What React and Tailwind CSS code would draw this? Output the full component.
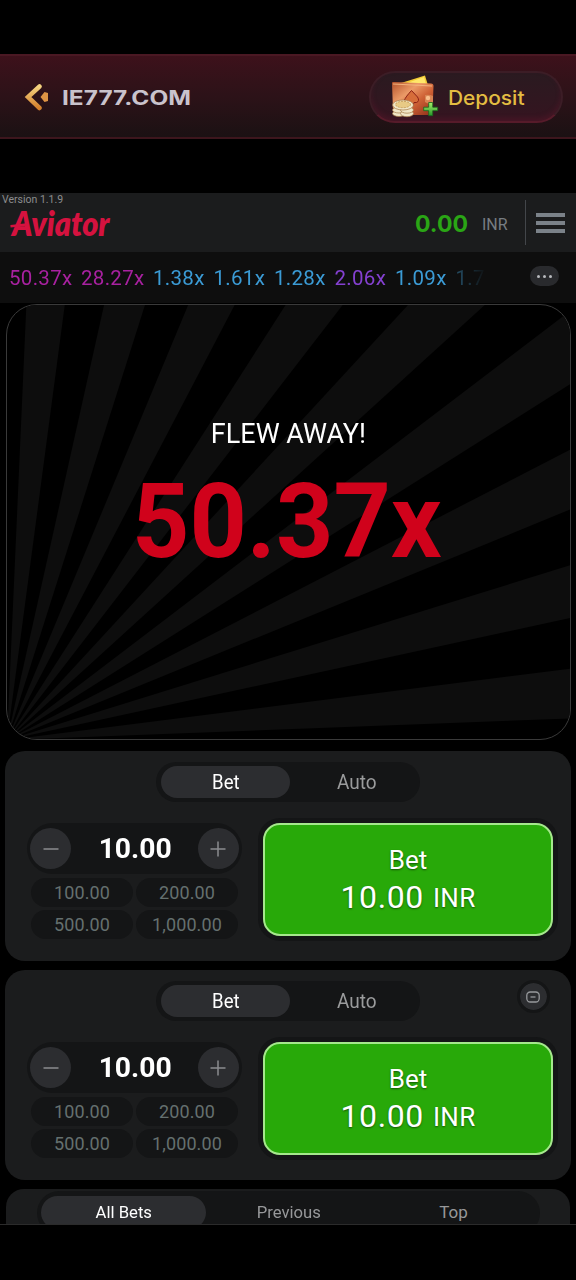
import React from "react";

const rounds = [
  { value: "50.37x", color: "text-[#a821a0]", width: "w-[72px]" },
  { value: "28.27x", color: "text-[#a821a0]", width: "w-[72px]" },
  { value: "1.38x", color: "text-[#3b9bd5]", width: "w-[60.5px]" },
  { value: "1.61x", color: "text-[#3b9bd5]", width: "w-[60.5px]" },
  { value: "1.28x", color: "text-[#3b9bd5]", width: "w-[60.5px]" },
  { value: "2.06x", color: "text-[#8440d0]", width: "w-[60.5px]" },
  { value: "1.09x", color: "text-[#3b9bd5]", width: "w-[60.5px]" },
  { value: "1.7", color: "text-[#2b5f7d]", width: "w-[40px]" },
];

function Wallet() {
  return (
    <svg width="50" height="44" viewBox="0 0 50 44" className="shrink-0">
      <defs>
        <linearGradient id="leather" x1="0" y1="0" x2="1" y2="1">
          <stop offset="0" stopColor="#b4512a" />
          <stop offset="0.35" stopColor="#eb9a67" />
          <stop offset="0.6" stopColor="#cf6236" />
          <stop offset="1" stopColor="#8d2c18" />
        </linearGradient>
        <linearGradient id="plus" x1="0" y1="0" x2="0" y2="1">
          <stop offset="0" stopColor="#a4f06a" />
          <stop offset="1" stopColor="#259529" />
        </linearGradient>
      </defs>
      <path d="M12 8 36 0.500 39.500 12 20 15Z" fill="#f3cd35" />
      <path d="M18 8 35 2 37.500 11Z" fill="#ffe76a" />
      <path d="M3 8Q3 6.500 5 7L42 8.500Q44.500 8.500 44.500 11L43.500 37Q43.500 40 41 40H8Q4 40 4 36Z" fill="url(#leather)" />
      <path d="M4 9 43 11" stroke="#f2b27d" strokeWidth="1.200" fill="none" />
      <path d="M22.500 15.500 28.500 22Q31 26 27.500 27.500L25 27.500 24 31 22 27.500Q16 29 15.500 25Q16.500 22 22.500 15.500Z" fill="#d66d3a" stroke="#8b2116" strokeWidth="1" />
      <path d="M36 20Q40 19 44 21V28Q40 30 36 27Z" fill="#d78352" />
      <circle cx="39" cy="23" r="2.200" fill="#f8bd8b" />
      <g fill="#f1e6c6" stroke="#a37a48" strokeWidth="0.700">
        <ellipse cx="10" cy="38.500" rx="6.500" ry="3" />
        <ellipse cx="10" cy="35" rx="6.500" ry="3" />
        <ellipse cx="18" cy="38.500" rx="6.500" ry="3.200" />
        <ellipse cx="18" cy="35" rx="6.500" ry="3.200" />
        <ellipse cx="14" cy="30" rx="10.500" ry="5" />
      </g>
      <ellipse cx="14" cy="29.500" rx="7.500" ry="3.200" fill="#e8ca85" stroke="#b98c46" strokeWidth="0.700" strokeDasharray="2 1" />
      <path d="M39.700 27.500H43.700V32.200H48.700V35.700H43.700V40.700H39.700V35.700H34.700V32.200H39.700Z" fill="url(#plus)" stroke="#17631d" strokeWidth="0.800" />
    </svg>
  );
}

function TopBar() {
  return (
    <header className="mt-[54px] flex h-[85px] shrink-0 items-center justify-between border-t-2 border-b-2 border-t-[#4a1823] border-b-[#3d161d] bg-linear-to-b from-[#3d111b] via-[#2c1218] to-[#1b1113] pr-[13px] pl-[24px]">
      <div className="flex items-center gap-[13px]">
        <svg width="26" height="28" viewBox="0 0 26 28">
          <defs>
            <linearGradient id="gold" x1="0" y1="0" x2="0" y2="1">
              <stop offset="0" stopColor="#f4d37f" />
              <stop offset="1" stopColor="#d4802c" />
            </linearGradient>
          </defs>
          <path d="M15.500 3.500 4 14 15.500 25" fill="none" stroke="url(#gold)" strokeWidth="4.500" strokeLinecap="round" />
          <path d="M20.500 9 24 10V18L20.500 19 16.500 14Z" fill="#df9545" />
        </svg>
        <svg width="130" height="24" viewBox="0 0 130 24" className="-ml-[1px] overflow-visible">
          <text x="0" y="19.500" textLength="129" lengthAdjust="spacingAndGlyphs" fill="#c9c3cc" className="font-['Inter',sans-serif] text-[19.500px] font-bold">IE777.COM</text>
        </svg>
      </div>
      <button className="mt-[1px] flex h-[52px] w-[194px] items-center rounded-full border-2 border-[#3c1d26] border-b-[#561b2a] bg-linear-to-b from-[#2a1a20] to-[#351420] pl-[18px] shadow-[inset_0_-3px_5px_rgba(110,25,50,0.3)]">
        <Wallet />
        <svg width="80" height="30" viewBox="0 0 80 30" className="ml-[9px] overflow-visible">
          <text x="0" y="22.500" textLength="76.500" lengthAdjust="spacingAndGlyphs" fill="#e4bd42" className="font-['Inter',sans-serif] text-[20px] font-medium">Deposit</text>
        </svg>
      </button>
    </header>
  );
}

function GameHeader() {
  return (
    <div className="mt-[54px] flex h-[59px] shrink-0 justify-between bg-[#1b1c1d] font-['Roboto',sans-serif]">
      <div className="flex flex-col">
        <span className="mt-[1px] ml-[2px] h-[11px] text-[10.500px] leading-[11px] text-[#8c8d8e]">Version 1.1.9</span>
        <svg width="104" height="34" viewBox="0 0 104 34" className="ml-[9px] overflow-visible">
          <text x="3" y="30.500" textLength="97.500" lengthAdjust="spacingAndGlyphs" fill="#d5123f" className="font-['Lato',sans-serif] text-[34px] font-extrabold italic">Aviator</text>
          <path d="M1.500 21.300 20 19.300" stroke="#d5123f" strokeWidth="2.600" />
        </svg>
      </div>
      <div className="flex items-center">
        <svg width="56" height="30" viewBox="0 0 56 30" className="overflow-visible">
          <text x="1" y="24" textLength="53" lengthAdjust="spacingAndGlyphs" fill="#2aa515" className="font-['Inter',sans-serif] text-[23px] font-bold">0.00</text>
        </svg>
        <span className="mt-[4px] ml-[12px] w-[43px] text-[16px] text-[#777d82]">INR</span>
        <div className="h-[45px] w-px bg-[#43464a]" />
        <div className="mr-[11px] ml-[10px] flex w-[29px] flex-col gap-[4px]">
          <i className="h-[4px] bg-[#7b8289]" />
          <i className="h-[4px] bg-[#7b8289]" />
          <i className="h-[4px] bg-[#7b8289]" />
        </div>
      </div>
    </div>
  );
}

function History() {
  return (
    <div className="flex h-[51px] shrink-0 items-center justify-between bg-[#0e0e0e] pr-[17px] pl-[9px] font-['Roboto',sans-serif]">
      <div className="mt-px flex w-[500px] text-[20.500px] mask-r-from-[438px] mask-r-to-[478px] mask-alpha">
        {rounds.map((r) => (
          <span key={r.value} className={`shrink-0 tracking-[0.300px] ${r.width} ${r.color}`}>{r.value}</span>
        ))}
      </div>
      <div className="mb-[3px] flex h-[20px] w-[29px] shrink-0 items-center justify-center gap-[3px] rounded-full bg-[#292a2d]">
        <i className="size-[3px] rounded-full bg-[#b8babd]" />
        <i className="size-[3px] rounded-full bg-[#b8babd]" />
        <i className="size-[3px] rounded-full bg-[#b8babd]" />
      </div>
    </div>
  );
}

const rayPoint = (deg) => {
  const a = (deg * Math.PI) / 180;
  return `${(Math.sin(a) * 900).toFixed(1)},${(435 - Math.cos(a) * 900).toFixed(1)}`;
};
const rays = Array.from({ length: 9 }, (_, i) => 2.55 + i * 10.03);

function Stage() {
  return (
    <div className="relative mt-[1px] mr-[5px] ml-[6px] h-[436px] shrink-0 overflow-hidden rounded-[31px] border border-[#3a3a3a] bg-black">
      <svg className="absolute inset-0" width="563" height="435" viewBox="0 0 563 435">
        {rays.map((d) => (
          <polygon key={d} fill="#0d0d0d" points={`0,435 ${rayPoint(d)} ${rayPoint(d + 5.015)}`} />
        ))}
      </svg>
      <div className="relative flex flex-col items-center font-['Roboto',sans-serif]">
        <div className="mt-[110px] scale-x-[0.965] text-[28px] leading-[38px] text-white">FLEW AWAY!</div>
        <div className="mt-[8px] mr-[3px] scale-x-[0.963] text-[104px] leading-[122px] font-bold text-[#d0021b]">50.37x</div>
      </div>
    </div>
  );
}

function Chip({ children }) {
  return <div className="flex h-[29px] w-[102px] items-center justify-center rounded-full bg-[#141516] text-[18px] tracking-[0.100px] text-[#65706f]">{children}</div>;
}

function BetPanel({ collapsible }) {
  return (
    <section className="relative mx-[5px] h-[210px] shrink-0 rounded-[20px] bg-[#1b1c1d] font-['Roboto',sans-serif]">
      <div className="flex justify-center pt-[11px]">
        <div className="flex h-[40px] w-[264px] items-center rounded-full bg-[#141516] pl-[5px] text-[20px]">
          <div className="flex h-[32px] w-[129px] shrink-0 items-center justify-center rounded-full bg-[#2c2d30] text-white"><span className="scale-x-[0.93]">Bet</span></div>
          <div className="flex w-[130px] items-center justify-center pl-[4px] text-[#9a9b9c]"><span className="scale-x-[0.95]">Auto</span></div>
        </div>
      </div>
      {collapsible && (
        <div className="absolute top-[13px] right-[24.500px] flex size-[27px] items-center justify-center rounded-full bg-[#2c2d30] outline-3 outline-[#141516]">
          <svg width="14" height="12" viewBox="0 0 14 12" fill="none" stroke="#97999c" strokeWidth="1.300">
            <rect x="0.800" y="1" width="12.400" height="10" rx="3.500" />
            <path d="M4.500 6H9.500" />
          </svg>
        </div>
      )}
      <div className="mt-[16px] flex pl-[22px]">
        <div className="flex w-[215px] flex-col">
          <div className="mt-[5px] flex h-[51px] items-center justify-between rounded-full bg-[#141516] px-[3px]">
            <div className="flex size-[41px] items-center justify-center rounded-full bg-[#2c2d30]">
              <svg width="16" height="16"><path d="M0.500 8H15.500" stroke="#8b8c8f" strokeWidth="1.500" /></svg>
            </div>
            <span className="pl-[2px] text-[28px] font-bold text-white"><span className="inline-block scale-x-[1.01]">10.00</span></span>
            <div className="flex size-[41px] items-center justify-center rounded-full bg-[#2c2d30]">
              <svg width="16" height="16"><path d="M0.500 8H15.500M8 0.500V15.500" stroke="#8b8c8f" strokeWidth="1.500" /></svg>
            </div>
          </div>
          <div className="mt-[4px] ml-[4px] grid grid-cols-[102px_102px] gap-x-[3px] gap-y-[3px]">
            <Chip>100.00</Chip>
            <Chip>200.00</Chip>
            <Chip>500.00</Chip>
            <Chip>1,000.00</Chip>
          </div>
        </div>
        <div className="ml-[16px] h-[123px] w-[300px] rounded-[22px] bg-[#141516] p-[5px]">
          <button className="flex h-[113px] w-[290px] flex-col items-center rounded-[17px] border-2 border-[#a5e88c] bg-[#28a909] pt-[17px] text-white text-shadow-[0_1px_2px_rgba(0,0,0,0.5)]">
            <span className="text-[26px] leading-[36px]"><span className="inline-block">Bet</span></span>
            <span className="flex h-[38px] items-baseline gap-[9px] text-[32px] leading-[38px]">
              <span className="tracking-[0.600px]">10.00</span>
              <span className="-translate-y-[1px] text-[26px] tracking-[0.300px]">INR</span>
            </span>
          </button>
        </div>
      </div>
    </section>
  );
}

function BetTabs() {
  return (
    <section className="mx-[6px] h-[35px] shrink-0 overflow-hidden rounded-t-[18px] bg-[#1b1c1d] px-[31px] font-['Roboto',sans-serif]">
      <div className="mt-[2px] flex h-[44px] w-[503px] rounded-full bg-[#141516] px-[4px] pt-[5px] text-[17px] text-[#97989a]">
        <div className="flex h-[33px] w-[165px] items-center justify-center rounded-full bg-[#2c2d30] text-white"><span className="scale-x-[0.98]">All Bets</span></div>
        <div className="flex h-[33px] w-[165px] items-center justify-center"><span className="scale-x-[0.98]">Previous</span></div>
        <div className="flex h-[33px] w-[165px] items-center justify-center">Top</div>
      </div>
    </section>
  );
}

export default function App() {
  return (
    <main className="flex h-[1280px] w-[576px] flex-col overflow-hidden bg-black">
      <TopBar />
      <GameHeader />
      <History />
      <Stage />
      <div className="mt-[11px] flex shrink-0 flex-col gap-[9px]">
        <BetPanel />
        <BetPanel collapsible />
        <BetTabs />
      </div>
      <div className="h-px shrink-0 bg-[#2b2b2b]" />
    </main>
  );
}
